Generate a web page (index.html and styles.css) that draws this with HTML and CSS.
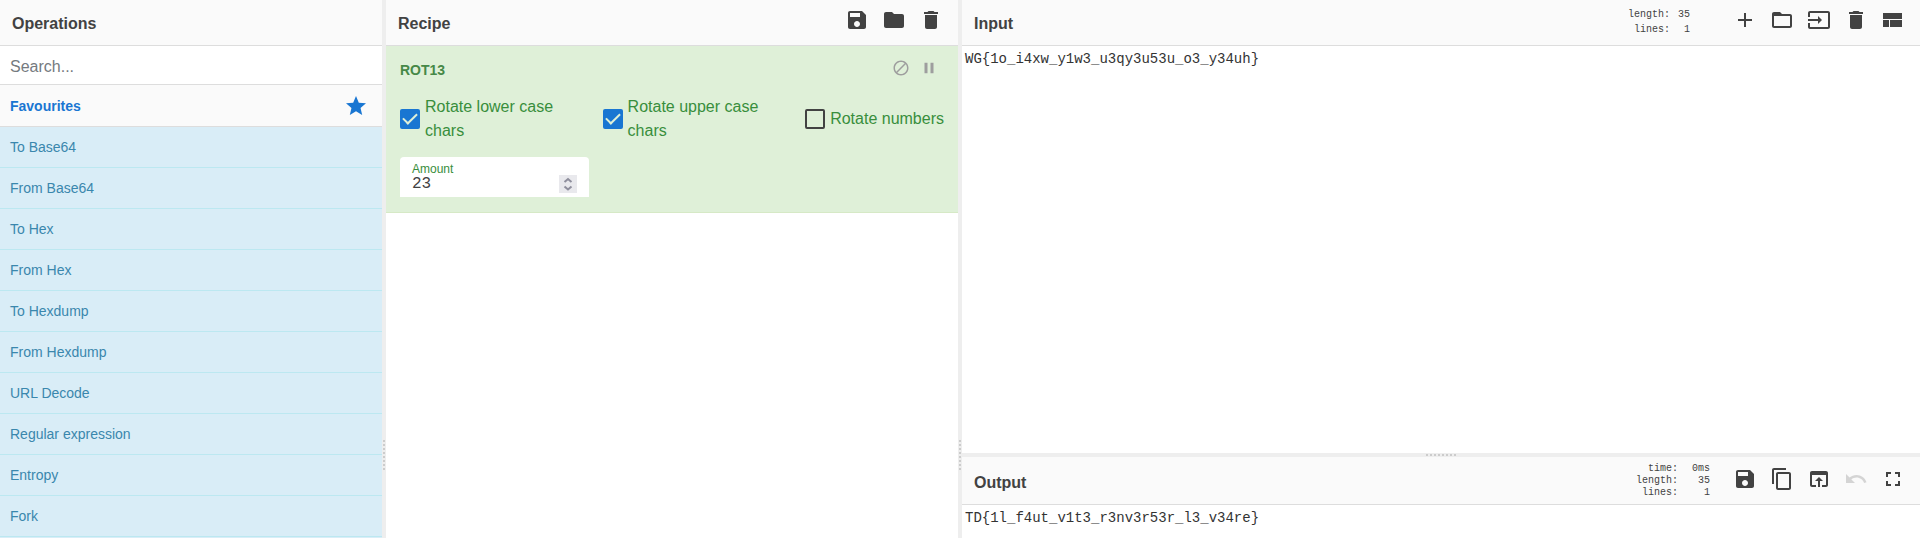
FILE: index.html
```html
<!DOCTYPE html>
<html lang="en">
<head>
<meta charset="utf-8">
<title>Recipe workbench</title>
<link rel="stylesheet" href="styles.css">
</head>
<body>
<main class="workspace">
  <section class="operations">
    <header class="title-bar"><h2>Operations</h2></header>
    <input class="search" type="search" placeholder="Search..." aria-label="Search operations">
    <button class="category" type="button">Favourites
      <svg class="icon" viewBox="0 0 24 24"><path d="M12 17.27L18.18 21l-1.64-7.03L22 9.24l-7.19-.61L12 2 9.19 8.63 2 9.24l5.46 4.73L5.82 21z"/></svg>
    </button>
    <ul class="op-list">
      <li>To Base64</li>
      <li>From Base64</li>
      <li>To Hex</li>
      <li>From Hex</li>
      <li>To Hexdump</li>
      <li>From Hexdump</li>
      <li>URL Decode</li>
      <li>Regular expression</li>
      <li>Entropy</li>
      <li>Fork</li>
    </ul>
  </section>
  <div class="gutter gutter-column"></div>
  <section class="recipe">
    <header class="title-bar">
      <h2>Recipe</h2>
      <div class="tools">
        <button type="button" aria-label="Save recipe"><svg class="icon" viewBox="0 0 24 24"><path d="M17 3H5c-1.11 0-2 .9-2 2v14c0 1.1.89 2 2 2h14c1.1 0 2-.9 2-2V7l-4-4zm-5 16c-1.66 0-3-1.34-3-3s1.34-3 3-3 3 1.34 3 3-1.34 3-3 3zm3-10H5V5h10v4z"/></svg></button>
        <button type="button" aria-label="Load recipe"><svg class="icon" viewBox="0 0 24 24"><path d="M10 4H4c-1.1 0-1.99.9-1.99 2L2 18c0 1.1.9 2 2 2h16c1.1 0 2-.9 2-2V8c0-1.1-.9-2-2-2h-8l-2-2z"/></svg></button>
        <button type="button" aria-label="Clear recipe"><svg class="icon" viewBox="0 0 24 24"><path d="M6 19c0 1.1.9 2 2 2h8c1.1 0 2-.9 2-2V7H6v12zM19 4h-3.500l-1-1h-5l-1 1H5v2h14V4z"/></svg></button>
      </div>
    </header>
    <article class="operation">
      <div class="op-head">
        <h3>ROT13</h3>
        <div class="op-tools">
          <button type="button" aria-label="Disable operation"><svg class="icon-small" viewBox="0 0 24 24"><path d="M12 2C6.480 2 2 6.480 2 12s4.480 10 10 10 10-4.480 10-10S17.520 2 12 2zM4 12c0-4.420 3.580-8 8-8 1.850 0 3.550.630 4.900 1.690L5.690 16.900C4.630 15.550 4 13.850 4 12zm8 8c-1.850 0-3.550-.630-4.900-1.690L18.310 7.100C19.370 8.450 20 10.150 20 12c0 4.420-3.580 8-8 8z"/></svg></button>
          <button type="button" aria-label="Set breakpoint"><svg class="icon-small" viewBox="0 0 24 24"><path d="M6 19h4V5H6v14zm8-14v14h4V5h-4z"/></svg></button>
        </div>
      </div>
      <div class="args">
        <label class="check"><input type="checkbox" checked><span>Rotate lower case chars</span></label>
        <label class="check"><input type="checkbox" checked><span>Rotate upper case chars</span></label>
        <label class="check"><input type="checkbox"><span>Rotate numbers</span></label>
        <div class="amount">
          <label for="amount">Amount</label>
          <div class="amount-row">
            <input id="amount" type="number" value="23">
            <svg class="stepper" viewBox="0 0 18 18"><path d="M5.500 7 9 4l3.500 3M5.500 11.500 9 14.500l3.500-3"/></svg>
          </div>
        </div>
      </div>
    </article>
  </section>
  <div class="gutter gutter-column"></div>
  <section class="io">
    <section class="pane input-pane">
      <header class="title-bar">
        <h2><label for="input-text">Input</label></h2>
        <dl class="stats"><dt>length:</dt><dd>35</dd><dt>lines:</dt><dd>1</dd></dl>
        <div class="tools">
          <button type="button" aria-label="Add input tab"><svg class="icon" viewBox="0 0 24 24"><path d="M19 13h-6v6h-2v-6H5v-2h6V5h2v6h6v2z"/></svg></button>
          <button type="button" aria-label="Open folder"><svg class="icon" viewBox="0 0 24 24"><path d="M20 6h-8l-2-2H4c-1.100 0-1.990.9-1.990 2L2 18c0 1.100.9 2 2 2h16c1.100 0 2-.9 2-2V8c0-1.100-.9-2-2-2zm0 12H4V8h16v10z"/></svg></button>
          <button type="button" aria-label="Open file"><svg class="icon" viewBox="0 0 24 24"><path d="M21 3.010H3c-1.100 0-2 .9-2 2V9h2V4.990h18v14.030H3V15H1v4.010c0 1.100.9 1.980 2 1.980h18c1.100 0 2-.880 2-1.980v-14c0-1.110-.9-2-2-2zM11 16l4-4-4-4v3H1v2h10v3z"/></svg></button>
          <button type="button" aria-label="Clear input"><svg class="icon" viewBox="0 0 24 24"><path d="M6 19c0 1.100.9 2 2 2h8c1.100 0 2-.9 2-2V7H6v12zM19 4h-3.500l-1-1h-5l-1 1H5v2h14V4z"/></svg></button>
          <button type="button" aria-label="Reset layout"><svg class="icon" viewBox="0 0 24 24"><path d="M2 5h19v6H2zM2 12h6v7H2zM9 12h12v7H9z"/></svg></button>
        </div>
      </header>
      <textarea class="text" id="input-text" spellcheck="false">WG{1o_i4xw_y1w3_u3qy3u53u_o3_y34uh}</textarea>
    </section>
    <div class="gutter gutter-row"></div>
    <section class="pane output-pane">
      <header class="title-bar">
        <h2><label for="output-text">Output</label></h2>
        <dl class="stats"><dt>time:</dt><dd>0ms</dd><dt>length:</dt><dd>35</dd><dt>lines:</dt><dd>1</dd></dl>
        <div class="tools">
          <button type="button" aria-label="Save output"><svg class="icon" viewBox="0 0 24 24"><path d="M17 3H5c-1.110 0-2 .9-2 2v14c0 1.100.890 2 2 2h14c1.100 0 2-.9 2-2V7l-4-4zm-5 16c-1.660 0-3-1.340-3-3s1.340-3 3-3 3 1.340 3 3-1.340 3-3 3zm3-10H5V5h10v4z"/></svg></button>
          <button type="button" aria-label="Copy output"><svg class="icon" viewBox="0 0 24 24"><path d="M16 1H4c-1.100 0-2 .9-2 2v14h2V3h12V1zm3 4H8c-1.100 0-2 .9-2 2v14c0 1.100.9 2 2 2h11c1.100 0 2-.9 2-2V7c0-1.100-.9-2-2-2zm0 16H8V7h11v14z"/></svg></button>
          <button type="button" aria-label="Move output to input"><svg class="icon" viewBox="0 0 24 24"><path d="M19 4H5c-1.110 0-2 .9-2 2v12c0 1.100.890 2 2 2h4v-2H5V8h14v10h-4v2h4c1.100 0 2-.9 2-2V6c0-1.100-.890-2-2-2zm-7 6l-4 4h3v6h2v-6h3l-4-4z"/></svg></button>
          <button type="button" aria-label="Undo" disabled><svg class="icon" viewBox="0 0 24 24"><path d="M12.500 8c-2.650 0-5.050.990-6.900 2.600L2 7v9h9l-3.620-3.620c1.390-1.160 3.160-1.880 5.120-1.880 3.540 0 6.550 2.310 7.600 5.500l2.370-.780C21.080 11.030 17.150 8 12.500 8z"/></svg></button>
          <button type="button" aria-label="Maximise output"><svg class="icon" viewBox="0 0 24 24"><path d="M7 14H5v5h5v-2H7v-3zm-2-4h2V7h3V5H5v5zm12 7h-3v2h5v-5h-2v3zM14 5v2h3v3h2V5h-5z"/></svg></button>
        </div>
      </header>
      <textarea class="text" id="output-text" rows="1" readonly spellcheck="false">TD{1l_f4ut_v1t3_r3nv3r53r_l3_v34re}</textarea>
    </section>
  </section>
</main>
</body>
</html>
```
FILE: styles.css
```css
* { box-sizing: border-box; }

body {
  margin: 0;
  overflow: hidden;
  background: #fff;
  color: #424242;
  font: 14px/20px "Liberation Sans", Arial, sans-serif;
}

h2, h3, ul, dl, dd { margin: 0; padding: 0; }
ul { list-style: none; }
button, input, textarea { font: inherit; color: inherit; border: 0; margin: 0; }
button { background: none; padding: 0; cursor: pointer; }
svg { display: block; fill: currentColor; }

.workspace {
  display: grid;
  grid-template-columns: minmax(0, 382fr) 4px minmax(0, 572fr) 4px minmax(0, 958fr);
  height: 100vh;
}

.title-bar {
  display: flex;
  align-items: center;
  height: 46px;
  flex: none;
  padding: 0 15px 0 12px;
  background: #fafafa;
  border-bottom: 1px solid #ddd;
}
.title-bar h2 { flex: 1; padding-top: 3px; font-size: 16px; line-height: 24px; }

.tools { display: flex; gap: 13px; padding-bottom: 5px; }
.tools button:disabled { opacity: .2; cursor: default; }
.icon { width: 24px; height: 24px; }

/* Splitters */
.gutter { position: relative; background: #eee; }
.gutter::before { content: ""; position: absolute; }
.gutter-column::before {
  left: 1px;
  bottom: 68px;
  width: 2px;
  height: 30px;
  background: repeating-linear-gradient(#ccc 0 2px, transparent 2px 4px);
}
.gutter-row { flex: 0 0 4px; }
.gutter-row::before {
  left: calc(50% - 15px);
  top: 1px;
  width: 30px;
  height: 2px;
  background: repeating-linear-gradient(90deg, #ccc 0 2px, transparent 2px 4px);
}

/* Operations */
.operations { display: flex; flex-direction: column; overflow: hidden; }
.search {
  width: 100%;
  height: 39px;
  flex: none;
  padding: 4px 10px 0;
  border-bottom: 1px solid #ddd;
  font-size: 16px;
  outline: 0;
  appearance: none;
}
.search::placeholder { color: #757a80; opacity: 1; }
.category {
  display: flex;
  align-items: center;
  justify-content: space-between;
  height: 42px;
  flex: none;
  padding: 0 14px 0 10px;
  background: #fafafa;
  border-bottom: 1px solid #ddd;
  color: #1976d2;
  font-weight: bold;
}
.op-list { flex: 1; background: #d9edf7; color: #3a87ad; }
.op-list li { padding: 10px; border-bottom: 1px solid #bce8f1; }

/* Recipe */
.operation {
  padding: 13px 14px 15px;
  background: #dff0d8;
  border-bottom: 1px solid #d6e9c6;
  color: #468847;
}
.op-head { display: flex; justify-content: space-between; }
.op-head h3 { padding-top: 1px; font-size: 14px; line-height: 20px; }
.op-tools { display: flex; align-items: flex-start; gap: 10px; padding-right: 6px; color: #9e9e9e; }
.icon-small { width: 18px; height: 18px; }
.args {
  display: grid;
  grid-template-columns: minmax(0, 1fr) minmax(0, 1fr) auto;
  gap: 14px;
  padding-top: 15px;
  color: #388e3c;
}
.check { display: flex; align-items: center; gap: 5px; font-size: 16px; line-height: 24px; }
.check input {
  appearance: none;
  flex: none;
  display: grid;
  place-content: center;
  width: 20px;
  height: 20px;
  border: 2px solid #424242;
  border-radius: 2px;
}
.check input:checked {
  border: 0;
  background: #1976d2;
}
.check input:checked::before {
  content: "";
  width: 6px;
  height: 12px;
  margin-bottom: 4px;
  border: solid #dff0d8;
  border-width: 0 2px 2px 0;
  transform: rotate(45deg);
}
.amount { padding: 6px 12px 4px; background: #fff; border-radius: 4px 4px 0 0; }
.amount label { display: block; font-size: 12px; line-height: 12px; }
.amount-row { display: flex; }
.amount input {
  flex: 1;
  min-width: 0;
  height: 18px;
  padding: 0;
  color: #424242;
  font-family: "Liberation Mono", monospace;
  font-size: 16px;
  line-height: 18px;
  appearance: textfield;
}
.amount input::-webkit-inner-spin-button { display: none; }
.stepper { width: 18px; height: 18px; background: #e9e9ed; fill: none; stroke: #8f8f9d; stroke-width: 2px; }

/* Input and output */
.io, .pane { display: flex; flex-direction: column; min-width: 0; }
.input-pane { flex: 1; }
.stats {
  display: grid;
  grid-template-columns: auto auto;
  column-gap: 8px;
  margin-right: 43px;
  padding-bottom: 2px;
  font: 10px/15px "Liberation Mono", monospace;
  text-align: right;
}
.output-pane .title-bar { height: 48px; }
.output-pane h2 { padding-top: 5px; }
.output-pane .stats { column-gap: 14px; margin-right: 23px; padding-bottom: 0; line-height: 12px; }
.output-pane .tools { padding-bottom: 3px; }
.text {
  display: block;
  width: 100%;
  padding: 3px;
  resize: none;
  outline: 0;
  font: 14px/20px "Liberation Mono", monospace;
  color: #333;
}
.input-pane .text { flex: 1; }
.output-pane .text { height: 33px; }
```
